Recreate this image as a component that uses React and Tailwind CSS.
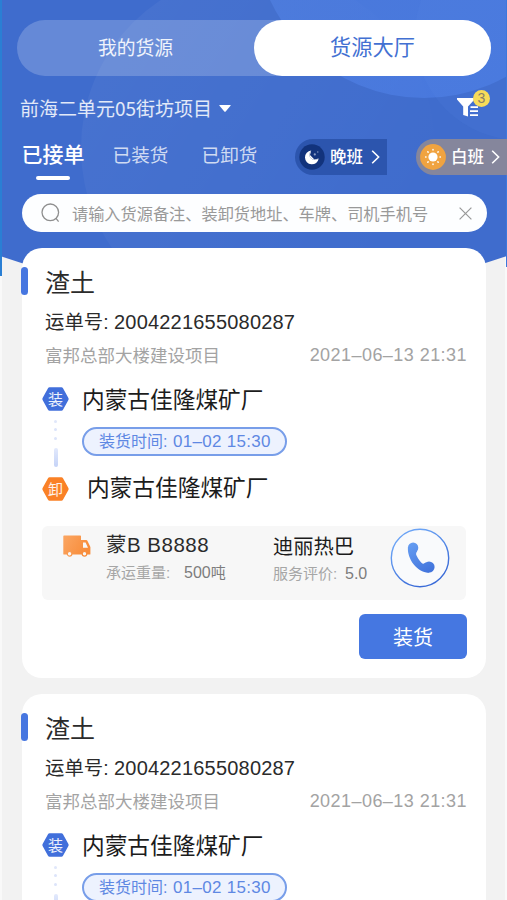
import React, { useState } from 'react';

const orders = [
  {
    id: 1,
    title: '渣土',
    number: '2004221655080287',
    project: '富邦总部大楼建设项目',
    date: '2021–06–13 21:31',
    from: '内蒙古佳隆煤矿厂',
    to: '内蒙古佳隆煤矿厂',
    loadTime: '01–02 15:30',
    weight: '500',
    driver: '迪丽热巴',
    score: '5.0',
  },
  {
    id: 2,
    title: '渣土',
    number: '2004221655080287',
    project: '富邦总部大楼建设项目',
    date: '2021–06–13 21:31',
    from: '内蒙古佳隆煤矿厂',
    to: '内蒙古佳隆煤矿厂',
    loadTime: '01–02 15:30',
    weight: '500',
    driver: '迪丽热巴',
    score: '5.0',
  },
];

const HeaderBackground = () => (
  <svg className="absolute left-0 top-0 w-[507px] h-[900px]" viewBox="0 0 507 900">
    <defs>
      <linearGradient id="arcLeft" x1="0" y1="0" x2="1" y2="0.6">
        <stop offset="0" stopColor="#fff" stopOpacity="0.05" />
        <stop offset="1" stopColor="#fff" stopOpacity="0" />
      </linearGradient>
      <linearGradient id="arcTop" x1="0" y1="0" x2="1" y2="1">
        <stop offset="0" stopColor="#5b8bea" stopOpacity="0.4" />
        <stop offset="1" stopColor="#4a7ce6" stopOpacity="0.7" />
      </linearGradient>
      <clipPath id="headerClip">
        <path d="M0 0H507V256Q253 344 0 256Z" />
      </clipPath>
    </defs>
    <rect width="2" height="900" fill="#f9f9f9" />
    <rect x="505" width="2" height="900" fill="#f9f9f9" />
    <g clipPath="url(#headerClip)">
      <rect width="507" height="300" fill="#3f6ccd" />
      <circle cx="258" cy="148" r="177" fill="url(#arcLeft)" />
      <circle cx="424" cy="-72" r="170" fill="url(#arcTop)" />
      <circle cx="520" cy="35" r="105" fill="#5b8bea" fillOpacity="0.12" />
    </g>
    <rect width="2" height="276" fill="#2a7fd4" />
    <rect x="506" width="1" height="267" fill="#3c78dc" />
  </svg>
);

const FilterIcon = () => (
  <svg className="w-[22px] h-[20px]" viewBox="0 0 22 20" fill="#fff">
    <path d="M0 0H17.5V1.6L11 8.4V18.5L6.2 17V8.4L0 1.6Z" />
    <path d="M13.5 8.2H21V10H13.5ZM13 12.2H21V14H13ZM13 16.2H21V18H13Z" />
  </svg>
);

const MoonIcon = () => (
  <svg className="w-[26px] h-[26px] shrink-0" viewBox="0 0 26 26">
    <circle cx="13" cy="13" r="12.7" fill="#12337c" />
    <path d="M12.2 6.6A6.9 6.9 0 1 0 19.7 14.6A4.6 4.6 0 0 1 12.2 6.6Z" fill="#fff" />
    <path d="M12.2 6.6A5.2 5.2 0 0 0 19.7 14.6L15.4 15.6L11 11Z" fill="#fff" />
    <circle cx="15.8" cy="10.4" r="1.1" fill="#8b9cc4" />
    <circle cx="18.8" cy="8" r="0.7" fill="#8b9cc4" />
  </svg>
);

const SunIcon = () => (
  <svg className="w-[26px] h-[26px] shrink-0" viewBox="0 0 26 26">
    <circle cx="13" cy="13" r="12.9" fill="#f0a340" />
    <circle cx="13" cy="13" r="4.6" fill="#fff" />
    <g stroke="#fff" strokeWidth="1.5" strokeLinecap="round">
      <path d="M13 5.6V6M13 20V20.4M5.6 13H6M20 13H20.4M7.8 7.8L8.1 8.1M17.9 17.9L18.2 18.2M18.2 7.8L17.9 8.1M8.1 17.9L7.8 18.2" />
    </g>
  </svg>
);

const Chevron = () => (
  <svg className="w-[9px] h-[14px] shrink-0" viewBox="0 0 9 14" fill="none" stroke="#fff" strokeWidth="1.6">
    <path d="M1.2 0.8L7.6 7L1.2 13.2" />
  </svg>
);

const Hexagon = ({ text, color }) => (
  <div className="relative flex items-center justify-center w-[27px] h-6">
    <svg className="absolute inset-0 w-[27px] h-6" viewBox="0 0 27 24" fill={color}>
      <path d="M7.6 0.3H19.4Q20.5 0.3 21 1.2L26.4 11.1Q26.9 12 26.4 12.9L21 22.8Q20.5 23.7 19.4 23.7H7.6Q6.5 23.7 6 22.8L0.6 12.9Q0.1 12 0.6 11.1L6 1.2Q6.5 0.3 7.6 0.3Z" />
    </svg>
    <span className="relative pt-px text-[15px] leading-6 text-white/90">{text}</span>
  </div>
);

const TruckIcon = () => (
  <svg className="w-[28px] h-[22px]" viewBox="0 0 28 22">
    <defs>
      <linearGradient id="truck" x1="0" y1="0" x2="1" y2="0.4">
        <stop offset="0" stopColor="#fba663" />
        <stop offset="1" stopColor="#f88d3b" />
      </linearGradient>
    </defs>
    <path d="M1 0.5H17.3Q18 0.5 18 1.2V5H23.2Q24 5 24.4 5.7L27.4 12V19Q27.4 19.6 26.8 19.6H1Q0.3 19.6 0.3 19V1.2Q0.3 0.5 1 0.5Z" fill="url(#truck)" />
    <path d="M20 7.4H22.6L25 12.8H20Z" fill="#f7f7f7" />
    <circle cx="6.6" cy="18.8" r="2.3" fill="#f7f7f7" stroke="#f99a50" strokeWidth="1.2" />
    <circle cx="21.5" cy="18.8" r="2.3" fill="#f7f7f7" stroke="#f88d3b" strokeWidth="1.2" />
  </svg>
);

const PhoneIcon = () => (
  <svg className="w-[60px] h-[60px]" viewBox="0 0 60 60">
    <defs>
      <linearGradient id="phone" gradientUnits="userSpaceOnUse" x1="18" y1="10" x2="42" y2="50">
        <stop offset="0" stopColor="#6ba3f5" />
        <stop offset="1" stopColor="#3b6cd8" />
      </linearGradient>
    </defs>
    <circle cx="30" cy="30" r="28.7" fill="#f9fafc" stroke="url(#phone)" strokeWidth="1.4" />
    <g fill="url(#phone)">
      <circle cx="23.1" cy="19.8" r="5.2" />
      <circle cx="39" cy="39" r="5.6" />
      <path d="M17.9 19.8C17.2 31 27.5 45.4 39.5 44.6L35.6 34.6C33.8 36.2 32.6 35.8 31.2 34.4C29.2 32.4 27.4 29.6 26.4 27.2C25.8 25.8 26.1 24.8 27.4 22.8Z" />
    </g>
  </svg>
);

const OrderCard = ({ order }) => (
  <div className="h-[430px] shrink-0 bg-white rounded-[20px] pt-4">
    <div className="flex items-center h-9">
      <div className="w-[7px] h-7 -mt-[2px] -ml-px rounded-full bg-[#4676e0]" />
      <h2 className="pt-px ml-[17px] text-[25px] leading-9 text-[#2b2b2b]">{order.title}</h2>
    </div>
    <div className="flex items-center h-9 mt-1 ml-[23px] text-[#2b2b2b]">
      <span className="w-[69px] pt-[2px] text-[19.4px] whitespace-nowrap">运单号:</span>
      <span className="text-[20px] tracking-[0.2px]">{order.number}</span>
    </div>
    <div className="flex items-center justify-between h-[30px] ml-[23px] mr-[19px] text-[#a3a3a3]">
      <span className="pt-[2px] text-[17.5px]">{order.project}</span>
      <span className="text-[18px] tracking-[0.45px]">{order.date}</span>
    </div>

    {/* loading and unloading points */}
    <div className="flex mt-[11px] ml-5">
      <div className="flex flex-col items-center w-[27px] pt-[6px]">
        <Hexagon text="装" color="#416fdb" />
        <div className="flex flex-col items-center w-1 h-[66px] pt-[9px]">
          <div className="w-[3px] h-[3px] rounded-full bg-[#e0e7fa]" />
          <div className="w-[3px] h-[3px] mt-[5px] rounded-full bg-[#dce4fa]" />
          <div className="w-[3px] h-[3px] mt-[6px] rounded-full bg-[#dce4fa]" />
          <div className="w-1 h-[19px] mt-2 rounded-full bg-linear-to-b from-[#e2e9fc] to-[#c5d3f7]" />
        </div>
        <Hexagon text="卸" color="#fa8126" />
      </div>
      <div className="ml-[13px]">
        <div className="h-9 text-[22.7px] leading-[38px] text-[#1c1c1c]">{order.from}</div>
        <div className="flex items-center w-[205px] h-[29px] mt-[10px] pl-[15px] rounded-full border-2 border-[#789ee9] bg-[#edf2fe] text-[#5e88e3]">
          <span className="w-[74px] pt-px text-[16px]">装货时间:</span>
          <span className="text-[17px] tracking-[0.3px] whitespace-nowrap">{order.loadTime}</span>
        </div>
        <div className="h-9 mt-[14px] ml-[5px] text-[22.7px] leading-9 text-[#1c1c1c]">{order.to}</div>
      </div>
    </div>

    <div className="flex h-[74px] mt-5 ml-5 mr-5 rounded-md bg-[#f7f7f7]">
      <div className="w-[64px] pt-[9px] pl-[21px]">
        <TruckIcon />
      </div>
      <div className="w-[167px] pt-1">
        <div className="h-[30px] text-[20.5px] leading-[30px] tracking-[0.5px] text-[#2b2b2b]">蒙B B8888</div>
        <div className="flex h-[26px] items-center">
          <span className="w-[78px] text-[15px] text-[#a6a6a6]">承运重量:</span>
          <span className="text-[16px] text-[#7d7d7d]">{order.weight}<span className="text-[15px]">吨</span></span>
        </div>
      </div>
      <div className="w-[117px] pt-[5px]">
        <div className="h-[30px] text-[20.3px] leading-[32px] text-[#1c1c1c]">{order.driver}</div>
        <div className="flex h-[26px] items-center">
          <span className="w-[72px] text-[15px] text-[#a6a6a6]">服务评价:</span>
          <span className="text-[16px] text-[#7d7d7d]">{order.score}</span>
        </div>
      </div>
      <button type="button" className="w-[60px] h-[60px] mt-[2px]">
        <PhoneIcon />
      </button>
    </div>

    <div className="flex justify-end mt-[14px] mr-[19px]">
      <button type="button" className="w-[108px] h-[45px] pt-[2px] rounded-md bg-[#4577e1] text-[20px] text-white">
        装货
      </button>
    </div>
  </div>
);

const App = () => {
  const [tab, setTab] = useState('已接单');

  return (
    <div className="relative w-[507px] h-[900px] overflow-hidden bg-[#f2f2f2] font-['Liberation_Sans','Noto_Sans_CJK_SC',sans-serif]">
      <HeaderBackground />
      <div className="relative flex flex-col w-[507px]">
        <div className="flex w-[474px] h-14 mt-5 ml-[17px] rounded-full bg-white/20">
          <button type="button" className="w-[237px] pt-[2px] text-[18.8px] text-white/90">我的货源</button>
          <button type="button" className="w-[237px] rounded-full bg-white text-[21.2px] text-[#4270d2]">货源大厅</button>
        </div>

        <div className="flex items-center justify-between h-8 mt-4 ml-5 mr-[17px]">
          <div className="flex items-center">
            <span className="font-['Noto_Sans_CJK_SC',sans-serif] text-[19px] text-white/85 whitespace-nowrap">前海二单元05街坊项目</span>
            <svg className="w-3 h-[7px] ml-[7px]" viewBox="0 0 12 7" fill="#fff">
              <path d="M0.8 0H11.2Q12.2 0 11.5 0.8L6.7 6.4Q6 7 5.3 6.4L0.5 0.8Q-0.2 0 0.8 0Z" />
            </svg>
          </div>
          <div className="relative w-[33px] h-5">
            <FilterIcon />
            <span className="absolute -top-[8px] right-0 w-[17px] h-[17px] rounded-full bg-[#f7dc5a] text-center text-[14px] leading-[17px] text-[#8a8168]">3</span>
          </div>
        </div>

        <div className="flex items-start h-[55px] mt-[15px]">
          <div className="flex pl-[21px] w-[295px]">
            {['已接单', '已装货', '已卸货'].map((name) => (
              <button
                key={name}
                type="button"
                onClick={() => setTab(name)}
                className={`flex flex-col items-center h-[42px] whitespace-nowrap ${tab === name ? 'w-[64px] mr-[27px] text-[21px] font-medium text-white' : 'w-[57px] mr-8 text-[18.6px] text-white/75'}`}
              >
                <span className={`h-8 ${tab === name ? 'leading-8' : 'leading-[33px]'}`}>{name}</span>
                {tab === name ? <span className="w-[34px] h-1 mt-[5px] rounded-full bg-white" /> : null}
              </button>
            ))}
          </div>
          <div className="flex items-center w-[92px] h-9 pl-1 rounded-l-full bg-[#2c55ae]">
            <MoonIcon />
            <span className="ml-[5px] mr-[8px] text-[16.5px] font-medium text-white whitespace-nowrap">晚班</span>
            <Chevron />
          </div>
          <div className="flex items-center w-[91px] h-9 ml-[29px] pl-1 rounded-l-full bg-[#85869c]">
            <SunIcon />
            <span className="ml-[5px] mr-[7px] text-[16.5px] font-medium text-white whitespace-nowrap">白班</span>
            <Chevron />
          </div>
        </div>

        <div className="flex items-center w-[465px] h-[38px] ml-[22px] rounded-full bg-[#fdfeff] text-[#999]">
          <svg className="w-5 h-5 ml-[19px]" viewBox="0 0 20 20" fill="none" stroke="#8f8f8f" strokeWidth="1.3">
            <circle cx="9.3" cy="9.3" r="8.3" />
            <path d="M14.8 15.2L17.6 18.6" />
          </svg>
          <span className="w-[372px] pt-[2px] ml-[11px] text-[16.2px] whitespace-nowrap">请输入货源备注、装卸货地址、车牌、司机手机号</span>
          <svg className="w-[13px] h-[13px] ml-[15px]" viewBox="0 0 13 13" fill="none" stroke="#999" strokeWidth="1.2">
            <path d="M0.6 0.6L12.4 12.4M12.4 0.6L0.6 12.4" />
          </svg>
        </div>

        <div className="flex flex-col gap-4 w-[464px] mt-4 ml-[22px]">
          {orders.map((order) => (
            <OrderCard key={order.id} order={order} />
          ))}
        </div>
      </div>
    </div>
  );
};

export default App;
